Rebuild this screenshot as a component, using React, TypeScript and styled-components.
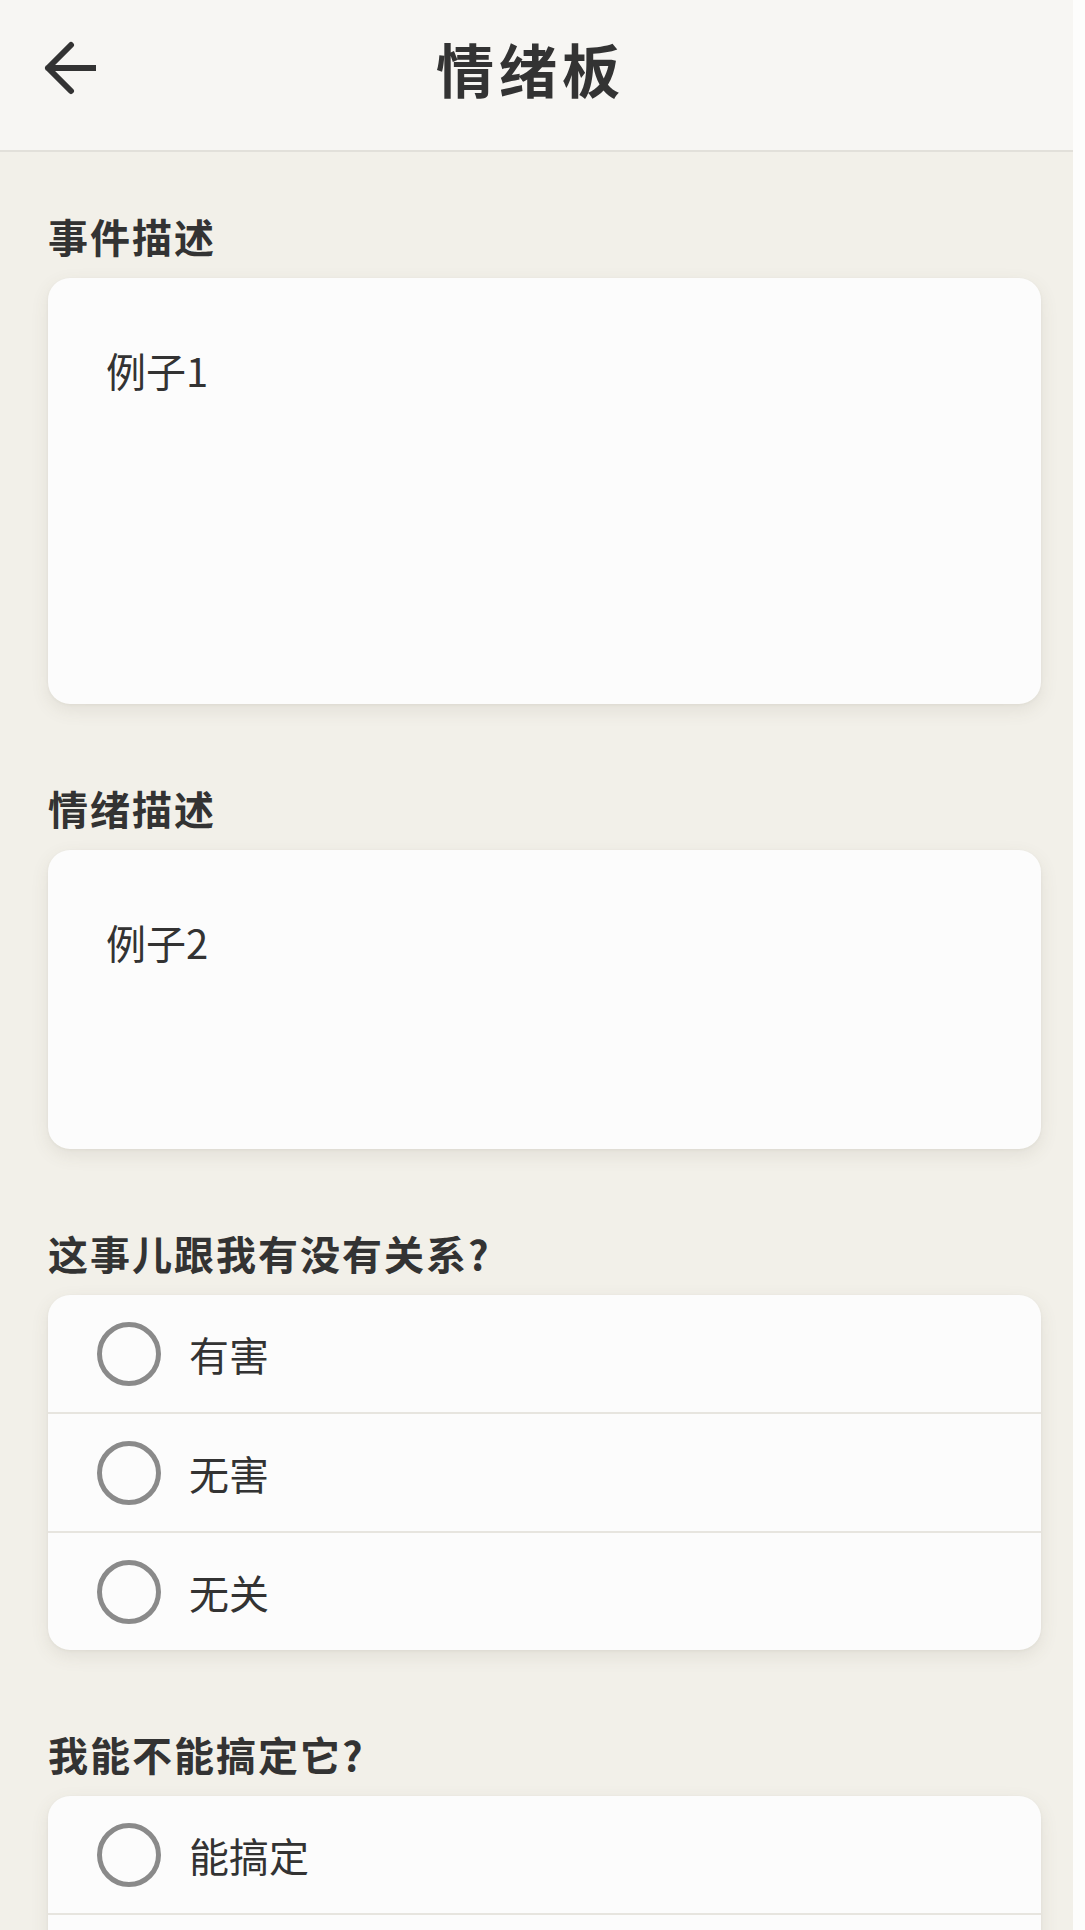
import React from 'react';
import styled, {createGlobalStyle} from 'styled-components';

const GlobalStyle = createGlobalStyle`
    html, body {
        margin: 0;
        padding: 0;
        background: #fdfdfc;
    }
    body {
        font-family: "Noto Sans CJK SC", "Noto Sans", sans-serif;
        color: #333;
    }
`;

const Page = styled.div`
    width: 1073px;
    min-height: 1930px;
    background: #f2f0e9;
`;

const Header = styled.header`
    height: 152px;
    box-sizing: border-box;
    display: grid;
    grid-template-columns: 1fr auto 1fr;
    align-items: center;
    padding: 0 46px 14px 34px;
    background: #f7f6f3;
    border-bottom: 2px solid #e2e0da;
`;

const BackButton = styled.button`
    justify-self: start;
    display: flex;
    padding: 0;
    border: none;
    background: transparent;
    cursor: pointer;
`;

const Title = styled.h1`
    margin: 0;
    font-size: 58px;
    font-weight: 700;
    letter-spacing: 5px;
    color: #333;
`;

const Content = styled.main`
    display: flex;
    flex-direction: column;
    gap: 80px;
    padding: 60px 32px 0 48px;
`;

const Section = styled.section`
    display: flex;
    flex-direction: column;
    gap: 18px;
`;

const Label = styled.h2`
    margin: 0;
    font-size: 40px;
    line-height: 48px;
    font-weight: 700;
    letter-spacing: 2px;
    color: #333;
`;

const Card = styled.div`
    background: #fcfcfc;
    border-radius: 22px;
    box-shadow: 0 6px 18px rgba(90, 80, 60, 0.1), 0 1px 3px rgba(90, 80, 60, 0.06);
    overflow: hidden;
`;

const TextBox = styled.textarea<{ $height: number }>`
    display: block;
    width: 100%;
    height: ${p => p.$height}px;
    box-sizing: border-box;
    padding: 68px 58px 0;
    border: none;
    outline: none;
    resize: none;
    background: transparent;
    font-family: "Noto Sans CJK SC", "Noto Sans", sans-serif;
    font-size: 40px;
    line-height: 48px;
    color: #333;
`;

const Option = styled.label`
    display: flex;
    align-items: center;
    gap: 28px;
    height: 117px;
    padding-left: 49px;
    font-size: 40px;
    color: #333;

    & + & {
        border-top: 2px solid #e7e5df;
    }
`;

const Radio = styled.input`
    appearance: none;
    width: 64px;
    height: 64px;
    margin: 0;
    box-sizing: border-box;
    border: 5px solid #8a8a8a;
    border-radius: 50%;
    background: transparent;
`;

const BackArrow = () => (
    <svg width="62" height="62" viewBox="0 0 62 62" fill="none">
        <path d="M14 31L37 8M14 31L37 54M14 31H61" stroke="#333" strokeWidth="6"
              strokeLinecap="round" strokeLinejoin="round"/>
    </svg>
);

const questions = [
    {name: 'relation', title: '这事儿跟我有没有关系?', options: ['有害', '无害', '无关']},
    {name: 'control', title: '我能不能搞定它?', options: ['能搞定', '搞不定']},
];

export default function App() {
    return (
        <>
            <GlobalStyle/>
            <Page>
                <Header>
                    <BackButton aria-label="返回"><BackArrow/></BackButton>
                    <Title>情绪板</Title>
                    <span/>
                </Header>
                <Content>
                    <Section>
                        <Label>事件描述</Label>
                        <Card>
                            <TextBox $height={426} defaultValue="例子1"/>
                        </Card>
                    </Section>
                    <Section>
                        <Label>情绪描述</Label>
                        <Card>
                            <TextBox $height={299} defaultValue="例子2"/>
                        </Card>
                    </Section>
                    {questions.map(q => (
                        <Section key={q.name}>
                            <Label>{q.title}</Label>
                            <Card>
                                {q.options.map(o => (
                                    <Option key={o}>
                                        <Radio type="radio" name={q.name}/>
                                        {o}
                                    </Option>
                                ))}
                            </Card>
                        </Section>
                    ))}
                </Content>
            </Page>
        </>
    );
}
